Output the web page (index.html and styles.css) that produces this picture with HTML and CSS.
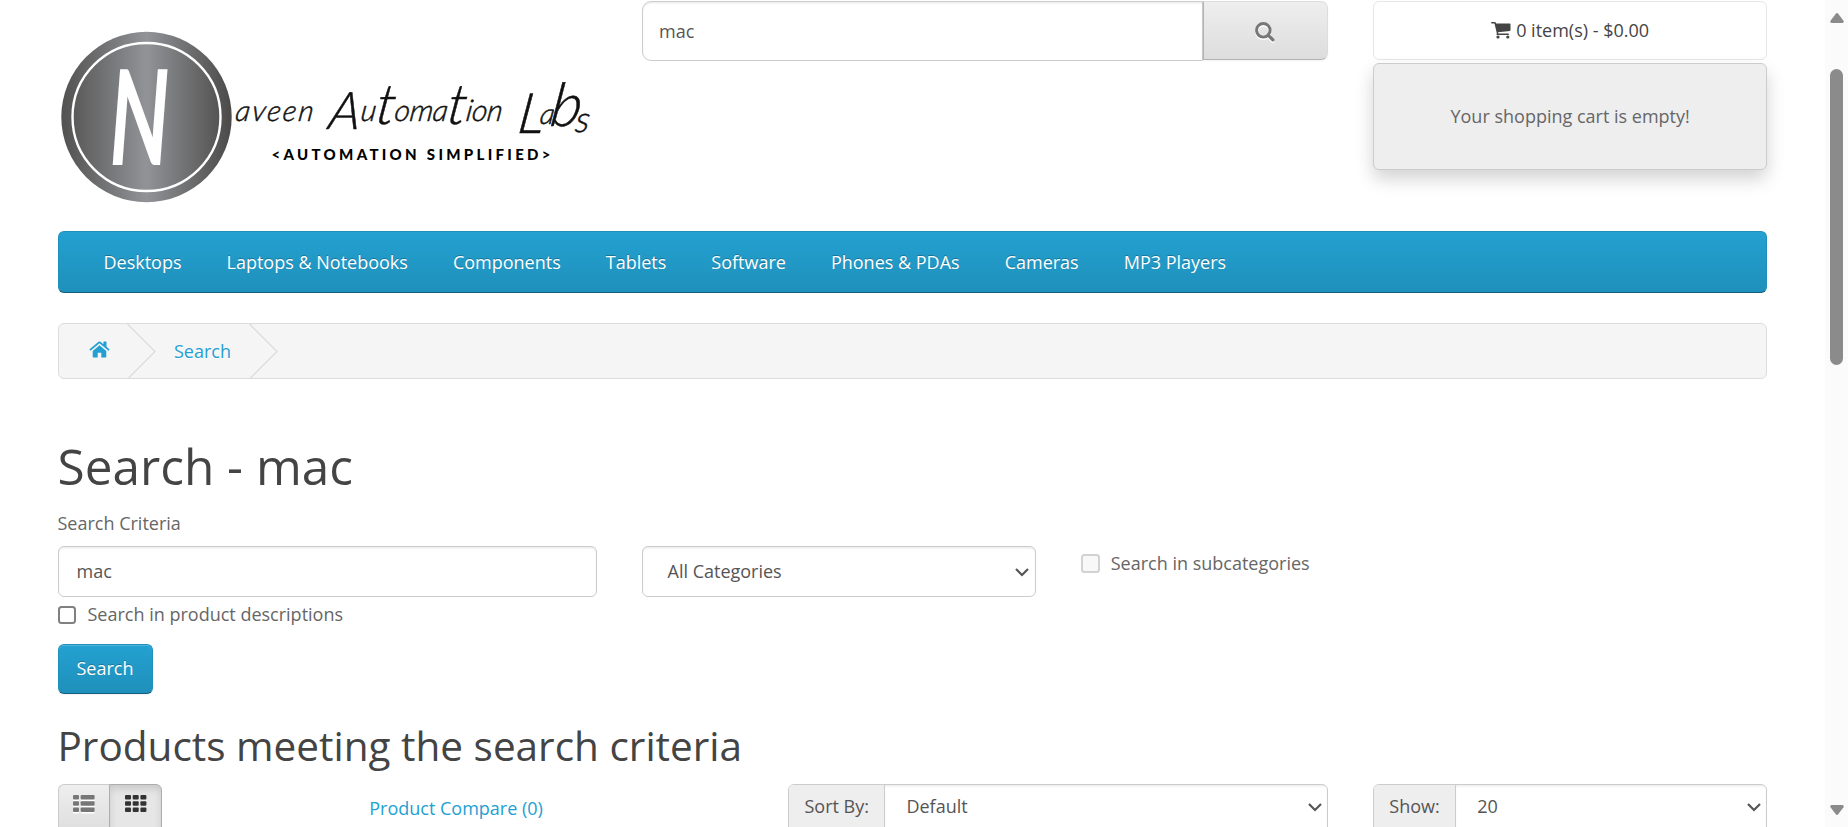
FILE: index.html
```html
<!DOCTYPE html>
<html lang="en">
<head>
<meta charset="utf-8">
<title>Search - mac</title>
<link rel="stylesheet" href="styles.css">
</head>
<body>
<div class="page">
<div class="container">
  <header class="header">
    <div class="logo">
      <svg width="540" height="190" viewBox="57.500 20 540 190">
        <defs>
          <linearGradient id="disc" x1="0" x2="1" y1="0" y2="0">
            <stop offset="0" stop-color="#525150"/>
            <stop offset=".5" stop-color="#919397"/>
            <stop offset="1" stop-color="#4b4a49"/>
          </linearGradient>
        </defs>
        <circle cx="146" cy="117" r="85.200" fill="url(#disc)"/>
        <circle cx="146" cy="117" r="74" fill="none" stroke="#fff" stroke-width="2.400"/>
        <text class="logo-n" transform="translate(109 164.500)" textLength="60" lengthAdjust="spacingAndGlyphs">N</text>
        <g class="logo-script">
          <text transform="translate(234 121) skewX(-8)" textLength="78" font-size="29">aveen</text>
          <text transform="translate(328 121) skewX(-8)" textLength="173" font-size="30"><tspan font-size="52" dy="8">A</tspan><tspan dy="-8">u</tspan><tspan font-size="56" dy="3">t</tspan><tspan dy="-3">oma</tspan><tspan font-size="56" dy="3">t</tspan><tspan dy="-3">ion</tspan></text>
          <text transform="translate(517 124) skewX(-8)" textLength="72" font-size="29"><tspan font-size="56" dy="9">L</tspan><tspan dy="-9">a</tspan><tspan font-size="60" dy="2">b</tspan><tspan font-size="36" dy="6">s</tspan></text>
        </g>
        <text class="logo-tag" x="271" y="159.500" textLength="279">&lt;AUTOMATION SIMPLIFIED&gt;</text>
      </svg>
    </div>
    <div class="searchbar">
      <div class="searchbar-input">mac</div>
      <div class="searchbar-btn">
        <svg width="22" height="22" viewBox="0 0 22 22" fill="none"><g stroke="#fff" transform="translate(0 1.500)"><circle cx="9.300" cy="9.300" r="6.800" stroke-width="2.900"/><path d="M14.300 14.300l4.600 4.600" stroke-width="3.200" stroke-linecap="round"/></g><g stroke="#777"><circle cx="9.300" cy="9.300" r="6.800" stroke-width="2.900"/><path d="M14.300 14.300l4.600 4.600" stroke-width="3.200" stroke-linecap="round"/></g></svg>
      </div>
    </div>
    <div class="cart">
      <div class="cart-btn">
        <svg width="20" height="17" viewBox="0 0 20 17" fill="#444"><path d="M0 .6Q0 0 .7 0h3.200q.8 0 1 .9L5.100 1.500H18.700q.8 0 .8.800V8.100q0 .7-.7.800L7 10.200l.3 1.400H17.300q.7 0 .7.700t-.7.700H6.200q-.8 0-.7-.8l.3-1L3.500 1.400H.7Q0 1.400 0 .6z"/><circle cx="7" cy="15" r="1.600"/><circle cx="16.800" cy="15" r="1.600"/></svg>
        <span>0 item(s) - $0.00</span>
      </div>
      <div class="cart-menu">Your shopping cart is empty!</div>
    </div>
  </header>

  <nav class="menu">
    <a>Desktops</a><a>Laptops &amp; Notebooks</a><a>Components</a><a>Tablets</a><a>Software</a><a>Phones &amp; PDAs</a><a>Cameras</a><a>MP3 Players</a>
  </nav>

  <div class="breadcrumb">
    <div class="home"><svg width="21" height="18" viewBox="0 0 21 18" fill="#239fd2"><path d="M10.500 4.200l6.800 5.700v5.900q0 .8-.8.800H12.300V11.700H8.700v4.900H4.500q-.8 0-.8-.8V9.900z"/><path d="M.3 8.500L9.500.8q1-.8 2 0l2.900 2.500V.9q0-.5.500-.5h2.100q.5 0 .5.500v4.900l3.200 2.700-1.200 1.300-9-7.500-9 7.500z"/></svg></div>
    <svg class="sep" width="29" height="55" viewBox="0 0 29 55" fill="none" stroke="#ddd" stroke-width="1.400"><path d="M.5 0L28 27.500.5 55"/></svg>
    <div class="crumb">Search</div>
    <svg class="sep" width="29" height="55" viewBox="0 0 29 55" fill="none" stroke="#ddd" stroke-width="1.400"><path d="M.5 0L28 27.500.5 55"/></svg>
  </div>

  <h1>Search - mac</h1>
  <div class="label">Search Criteria</div>
  <div class="criteria">
    <div class="field keyword">mac</div>
    <div class="field category"><span>All Categories</span><svg width="14" height="9" viewBox="0 0 14 9" fill="none" stroke="#555" stroke-width="2.200"><path d="M1 1l6 6 6-6"/></svg></div>
    <div class="sub"><i class="box disabled"></i><span>Search in subcategories</span></div>
  </div>
  <div class="desc"><i class="box"></i><span>Search in product descriptions</span></div>
  <div class="btn-primary">Search</div>

  <h2>Products meeting the search criteria</h2>
  <div class="toolbar">
    <div class="views">
      <div class="view"><svg width="22" height="20" viewBox="0 0 22 20"><g fill="#fff" transform="translate(0 1.500)"><rect width="6" height="4.600" rx="1"/><rect x="7.600" width="14" height="4.600" rx="1"/><rect y="6.200" width="6" height="4.600" rx="1"/><rect x="7.600" y="6.200" width="14" height="4.600" rx="1"/><rect y="12.400" width="6" height="4.600" rx="1"/><rect x="7.600" y="12.400" width="14" height="4.600" rx="1"/></g><g fill="#777"><rect width="6" height="4.600" rx="1"/><rect x="7.600" width="14" height="4.600" rx="1"/><rect y="6.200" width="6" height="4.600" rx="1"/><rect x="7.600" y="6.200" width="14" height="4.600" rx="1"/><rect y="12.400" width="6" height="4.600" rx="1"/><rect x="7.600" y="12.400" width="14" height="4.600" rx="1"/></g></svg></div>
      <div class="view active"><svg width="22" height="20" viewBox="0 0 22 20" fill="#333"><rect width="6" height="4.600" rx="1"/><rect x="7.700" width="6" height="4.600" rx="1"/><rect x="15.400" width="6" height="4.600" rx="1"/><rect y="6.200" width="6" height="4.600" rx="1"/><rect x="7.700" y="6.200" width="6" height="4.600" rx="1"/><rect x="15.400" y="6.200" width="6" height="4.600" rx="1"/><rect y="12.400" width="6" height="4.600" rx="1"/><rect x="7.700" y="12.400" width="6" height="4.600" rx="1"/><rect x="15.400" y="12.400" width="6" height="4.600" rx="1"/></svg></div>
    </div>
    <a class="compare">Product Compare (0)</a>
    <div class="group sort"><div class="addon">Sort By:</div><div class="select"><span>Default</span><svg width="14" height="9" viewBox="0 0 14 9" fill="none" stroke="#555" stroke-width="2.200"><path d="M1 1l6 6 6-6"/></svg></div></div>
    <div class="group show"><div class="addon">Show:</div><div class="select"><span>20</span><svg width="14" height="9" viewBox="0 0 14 9" fill="none" stroke="#555" stroke-width="2.200"><path d="M1 1l6 6 6-6"/></svg></div></div>
  </div>
</div>
<div class="scrollbar">
  <svg width="14" height="10" viewBox="0 0 14 10" fill="#8b8b8b"><path d="M5.800.7q1.200-1.200 2.400 0l5.300 7q.8 2-1 2.300H1.500q-1.800-.3-1-2.300z"/></svg>
  <div class="thumb"></div>
  <svg class="down" width="14" height="10" viewBox="0 0 14 10" fill="#8b8b8b"><path d="M5.800 9.300q1.200 1.200 2.400 0l5.300-7q.8-2-1-2.300H1.500q-1.800.3-1 2.300z"/></svg>
</div>
</div>
</body>
</html>
```
FILE: styles.css
```css
* { box-sizing: border-box; }
body {
  margin: 0;
  background: #fff;
  color: #666;
  font: 18px/27px "Open Sans", sans-serif;
}
svg { display: block; flex: none; }
.page { display: flex; height: 827px; overflow: hidden; }
.container { width: 1709.5px; margin-left: 57.5px; flex: none; }

.header { display: flex; height: 231px; padding-top: 1px; }
.logo { width: 584.5px; padding-top: 19px; }
.logo-n { font: italic 700 132px "Lato", sans-serif; fill: #fff; }
.logo-script { font-family: "Lato", sans-serif; font-style: italic; font-weight: 300; fill: #111; stroke: #111; stroke-width: .5; }
.logo-tag { font: 900 15px "Lato", sans-serif; fill: #000; }

.searchbar { display: flex; width: 686.25px; margin-right: 45px; height: 60px; }
.searchbar-input {
  width: 560.5px;
  padding: 16px;
  border: 1px solid #ccc;
  border-radius: 9px 0 0 9px;
  box-shadow: inset 0 1.5px 1.5px rgba(0, 0, 0, .075);
  color: #555;
}
.searchbar-btn {
  display: flex;
  align-items: center;
  justify-content: center;
  flex: 1;
  height: 59px;
  padding-top: 2px;
  border: 1px solid #ddd;
  border-color: #ddd #ddd #b3b3b3 #b3b3b3;
  border-radius: 0 7px 7px 0;
  background: linear-gradient(#eee, #ddd);
  box-shadow: 0 1px 2px rgba(0, 0, 0, .05);
}
.cart { flex: 1; }
.cart-btn {
  display: flex;
  justify-content: center;
  align-items: center;
  gap: 5px;
  height: 59px;
  border: 1px solid #e6e6e6;
  border-radius: 6px;
  color: #444;
}
.cart-menu {
  height: 107px;
  margin-top: 3px;
  padding-top: 39px;
  border: 1px solid #ccc;
  border-radius: 6px;
  background: #eee;
  box-shadow: 0 9px 18px rgba(0, 0, 0, .175);
  text-align: center;
}

.menu {
  display: flex;
  height: 62px;
  padding: 17px 22.5px 0;
  border: 1px solid #1f90bb;
  border-bottom-color: #145e7a;
  border-radius: 6px;
  background: linear-gradient(#23a1d1, #1f90bb);
}
.menu a { padding: 0 22.5px; color: #fff; text-shadow: 0 -1px 0 rgba(0, 0, 0, .25); }

.breadcrumb {
  display: flex;
  height: 56px;
  margin-top: 30px;
  border: 1px solid #ddd;
  border-radius: 6px;
  background: #f5f5f5;
  overflow: hidden;
}
.home { width: 68px; padding: 17px 0 0 30px; }
.crumb { width: 93px; padding: 14px 0 0 18.5px; color: #239fd2; text-shadow: 0 1px 0 #fff; }

h1, h2 { margin: 0; color: #444; font-weight: 400; white-space: nowrap; }
h1 { margin-top: 60px; font-size: 49.5px; line-height: 54px; }
h2 { margin-top: 30px; font-size: 40.5px; line-height: 44px; }
.label { margin-top: 17px; }
.criteria { display: flex; margin-top: 9px; }
.field {
  height: 51px;
  padding: 11px 18px;
  border: 1px solid #ccc;
  border-radius: 6px;
  box-shadow: inset 0 1.5px 1.5px rgba(0, 0, 0, .075);
  color: #555;
}
.keyword { width: 539.5px; }
.category { display: flex; justify-content: space-between; width: 393.75px; margin-left: 45px; padding: 11px 5.5px 0 24.5px; }
.category svg { margin-top: 10px; }
.sub { display: flex; gap: 11px; margin: 4px 0 0 45px; }
.sub .box { margin-top: 4px; }
.box { width: 18px; height: 18px; flex: none; border: 2px solid #808080; border-radius: 3.5px; background: #fff; }
.box.disabled { width: 19px; height: 19px; border-color: #d2d2d2; background: #f8f8f8; }
.desc { display: flex; gap: 12px; margin-top: 4px; }
.desc .box { margin-top: 5px; }
.btn-primary {
  width: 95px;
  height: 50px;
  margin-top: 16px;
  padding-top: 10px;
  border: 1px solid #1f90bb;
  border-bottom-color: #145e7a;
  border-radius: 6px;
  background: linear-gradient(#23a1d1, #1f90bb);
  box-shadow: inset 0 1px 0 rgba(255, 255, 255, .2), 0 1px 2px rgba(0, 0, 0, .05);
  color: #fff;
  text-align: center;
  text-shadow: 0 -1px 0 rgba(0, 0, 0, .25);
}

.toolbar { display: flex; margin-top: 16px; }
.views { display: flex; width: 104.5px; }
.view {
  width: 51.5px;
  height: 51px;
  padding: 10px 0 0 14.5px;
  border: 1px solid #ccc;
  border-right: 0;
  border-radius: 6px 0 0 6px;
  background: linear-gradient(#eee, #ddd);
}
.view.active {
  width: 53px;
  border: 1px solid #adadad;
  border-radius: 0 6px 6px 0;
  background: #e6e6e6;
  box-shadow: inset 0 4px 7px rgba(0, 0, 0, .125);
}
.compare { width: 420px; padding: 11px 0 0 207.25px; color: #239fd2; }
.group { display: flex; height: 51px; border: 1px solid #ccc; border-radius: 6px; color: #555; overflow: hidden; }
.sort { width: 540px; margin-left: 206.5px; }
.show { width: 393.75px; margin-left: 45px; }
.addon { width: 95.5px; padding-top: 8px; border-right: 1px solid #ccc; background: #eee; text-align: center; }
.show .addon { width: 81.5px; }
.select { display: flex; justify-content: space-between; flex: 1; padding: 8px 5px 0 21.5px; box-shadow: inset 0 1.5px 1.5px rgba(0, 0, 0, .075); }
.select svg { margin-top: 10px; }

.scrollbar { width: 23px; height: 827px; margin-left: auto; padding: 13px 4.5px 0; background: #fbfbfb; }
.thumb { width: 13px; height: 296px; margin-top: 46px; border-radius: 7px; background: #8b8b8b; }
.down { margin-top: 440px; }
```
